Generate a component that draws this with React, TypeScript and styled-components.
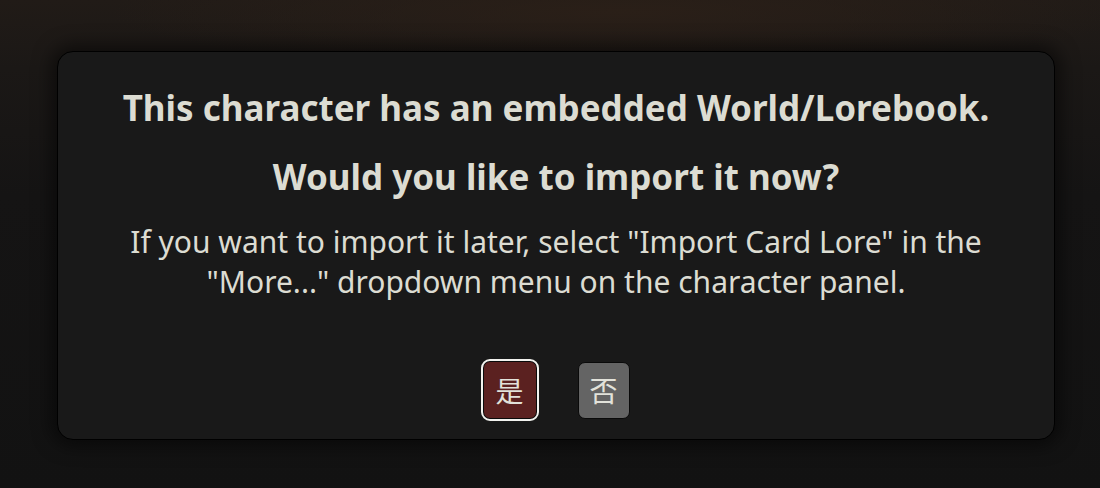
import React from 'react';
import styled, { createGlobalStyle } from 'styled-components';

const GlobalStyle = createGlobalStyle`
    html, body {
        margin: 0;
        padding: 0;
        height: 100%;
    }
    body {
        background: #141414;
        font-family: "Noto Sans", "Noto Sans CJK SC", sans-serif;
    }
`;

const Backdrop = styled.div`
    width: 1100px;
    height: 488px;
    box-sizing: border-box;
    padding: 51px 45px 0 57px;
    background:
        radial-gradient(ellipse 600px 70px at 620px 12px, rgba(44, 32, 24, 0.85), transparent 85%),
        linear-gradient(180deg, #211b17 0%, #1b1816 14%, #151414 40%, #121212 100%);
    overflow: hidden;
`;

const Dialog = styled.div`
    width: 998px;
    height: 389px;
    box-sizing: border-box;
    background: #191919;
    border: 1px solid #000;
    border-radius: 16px;
    box-shadow: 0 0 18px 6px rgba(0, 0, 0, 0.5);
    display: flex;
    flex-direction: column;
    align-items: center;
    padding-top: 32px;
    color: #dcdcd2;
`;

const Title = styled.h3<{ gap: number }>`
    margin: 0 0 ${({ gap }) => gap}px 0;
    font-size: 35px;
    font-weight: 700;
    line-height: 48px;
    text-align: center;
    white-space: nowrap;
`;

const Note = styled.p`
    margin: 0;
    font-size: 30px;
    line-height: 40px;
    text-align: center;
    max-width: 880px;
`;

const Buttons = styled.div`
    display: flex;
    align-items: center;
    gap: 41px;
    margin-top: 59px;
`;

const Choice = styled.button<{ primary?: boolean }>`
    width: ${({ primary }) => (primary ? '54px' : '52px')};
    height: ${({ primary }) => (primary ? '58px' : '57px')};
    box-sizing: border-box;
    border-radius: 7px;
    border: 1px solid #0a0a0a;
    background: ${({ primary }) => (primary ? '#5b2120' : '#646464')};
    outline: ${({ primary }) => (primary ? '2px solid #f2f2ee' : 'none')};
    outline-offset: 0;
    color: #e2e2da;
    font-family: "Noto Sans CJK SC", "Noto Sans", sans-serif;
    font-size: 28px;
    line-height: 1;
    padding: 0;
    display: flex;
    align-items: center;
    justify-content: center;
    cursor: pointer;
`;

export default function App() {
    return (
        <>
            <GlobalStyle />
            <Backdrop>
                <Dialog>
                    <Title gap={21}>This character has an embedded World/Lorebook.</Title>
                    <Title gap={21}>Would you like to import it now?</Title>
                    <Note>
                        If you want to import it later, select "Import Card Lore" in the "More..." dropdown menu on
                        the character panel.
                    </Note>
                    <Buttons>
                        <Choice primary>是</Choice>
                        <Choice>否</Choice>
                    </Buttons>
                </Dialog>
            </Backdrop>
        </>
    );
}
